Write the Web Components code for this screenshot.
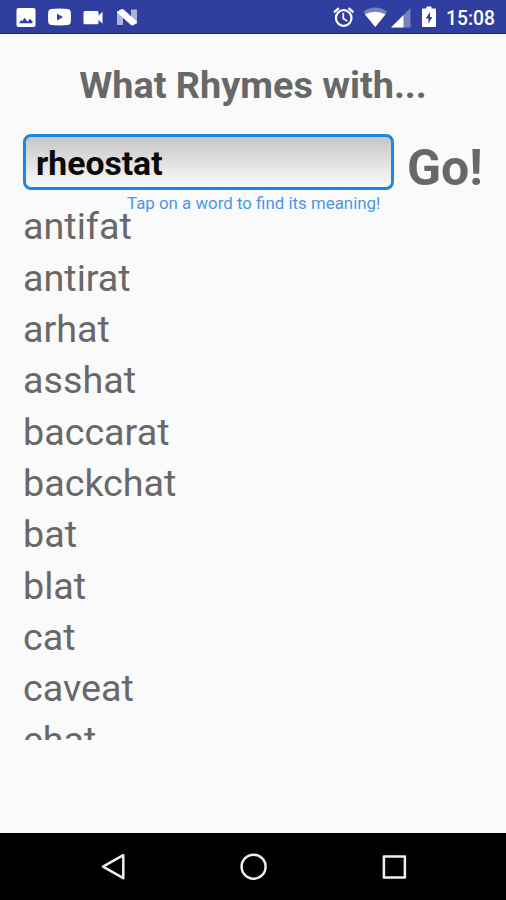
<!DOCTYPE html>
<html lang="en">
<head>
<meta charset="utf-8">
<title>What Rhymes with...</title>
<style>
    body {
        margin: 0;
        height: 900px;
        overflow: hidden;
        background: #fafafa;
        color: #686868;
        font-family: Roboto, "Liberation Sans", sans-serif;
    }
</style>
</head>
<body>
<rhyme-app>
    <status-bar slot="status">15:08</status-bar>
    <span slot="title">What Rhymes with...</span>
    <search-box slot="search" word="rheostat">Go!</search-box>
    <span slot="hint">Tap on a word to find its meaning!</span>
    <word-list slot="words" words="antifat antirat arhat asshat baccarat backchat bat blat cat caveat chat"></word-list>
    <nav-bar slot="nav"></nav-bar>
</rhyme-app>

<script>
function createTemplate(html) {
    const template = document.createElement('template');
    template.innerHTML = html;
    return template;
}

class BaseElement extends HTMLElement {
    constructor() {
        super();
        const shadowRoot = this.attachShadow({ mode: 'open' });
        shadowRoot.appendChild(this.constructor.template.content.cloneNode(true));
    }
}

class StatusBar extends BaseElement {}
StatusBar.template = createTemplate(`
    <style>
        :host {
            display: flex;
            justify-content: space-between;
            box-sizing: border-box;
            height: 34px;
            background: #303f9f;
            border-bottom: 1.5px solid #1a1f96;
            color: #fff;
        }
        svg { display: block; }
        .right { display: flex; }
        .time {
            width: 60px;
            font-size: 19.3px;
            font-weight: 500;
            line-height: 37px;
            white-space: nowrap;
        }
    </style>
    <svg width="150" height="33" viewBox="0 0 150 33" fill="#fff">
        <path fill-rule="evenodd" d="M18.5 8h15q2 0 2 2v15q0 2-2 2h-15q-2 0-2-2V10q0-2 2-2zM19 23.300h13.500v-1.800L30 18.700l-2.500 3-3-4-2.300 3.600-1-1.200z"/>
        <path fill-rule="evenodd" d="M51 9q8.500-.8 17 0 2.600.3 2.800 3 .4 5.500 0 10-.2 2.700-2.800 3-8.500.8-17 0-2.600-.3-2.800-3-.4-5 0-10 .2-2.700 2.800-3zM57 13.700v6.800l6-3.400z"/>
        <path d="M85 11h12q1.500 0 1.500 1.500v3.200l4-4v12l-4-4v3.100q0 1.500-1.500 1.500H85q-1.500 0-1.500-1.500V12.500Q83.500 11 85 11z"/>
        <path d="M117 11h6v14h-6zM131 9.500h6V24h-6z" opacity=".6"/>
        <path d="M117 12.500q3-4 6-3.500l14 12.500q-2 4-5.500 4z"/>
    </svg>
    <div class="right">
        <svg width="116" height="33" viewBox="330 0 116 33" fill="none" stroke="#fff">
            <circle cx="343.700" cy="18" r="7.800" stroke-width="2.200"/>
            <path d="M334 12.300l4.800-4.200M353.400 12.300l-4.800-4.200" stroke-width="2.200"/>
            <path d="M343.300 13v5.500l4 2.600" stroke-width="1.700"/>
            <path d="M363.500 11.500Q375 3.500 387 11.500L375.200 27z" fill="#fff" stroke="none" opacity=".35"/>
            <path d="M364.800 14.300Q375.200 9 385.700 14.300L375.200 27z" fill="#fff" stroke="none"/>
            <path d="M410.500 8v19.500H391z" fill="#fff" stroke="none" opacity=".35"/>
            <path d="M403.500 15v12.500H391z" fill="#fff" stroke="none"/>
            <path d="M426.500 6.500h5v2h3.500q1 0 1 1V26q0 1-1 1h-12q-1 0-1-1V9.500q0-1 1-1h3.500z" fill="#fff" stroke="none"/>
            <path d="M430 12l-4.300 6.500h2.700v5l4-6.500h-2.400z" fill="#303f9f" stroke="none"/>
        </svg>
        <div class="time"><slot></slot></div>
    </div>
`);

class SearchBox extends BaseElement {
    connectedCallback() {
        this.shadowRoot.querySelector('.field').textContent = this.getAttribute('word');
    }
}
SearchBox.template = createTemplate(`
    <style>
        :host {
            display: flex;
            gap: 13px;
            height: 56px;
            font-weight: bold;
        }
        .field {
            box-sizing: border-box;
            width: 371px;
            padding-left: 10px;
            border: 3px solid #1e88e0;
            border-radius: 8px;
            background: linear-gradient(#c6c6c6, #fafafa);
            color: #0a0a0a;
            font-size: 33.700px;
            line-height: 54px;
        }
        .go {
            font-size: 50px;
            line-height: 68px;
            white-space: nowrap;
        }
    </style>
    <div class="field"></div>
    <div class="go"><slot></slot></div>
`);

class WordList extends BaseElement {
    connectedCallback() {
        const list = this.shadowRoot.querySelector('ul');
        this.getAttribute('words').split(' ').forEach((word) => {
            const item = document.createElement('li');
            item.textContent = word;
            list.appendChild(item);
        });
    }
}
WordList.template = createTemplate(`
    <style>
        :host {
            display: block;
            height: 535.700px;
            overflow: hidden;
            font-size: 37.700px;
        }
        ul {
            margin: 0;
            padding: 0;
            list-style: none;
        }
        li {
            height: 51.350px;
            line-height: 45px;
        }
    </style>
    <ul></ul>
`);

class NavBar extends BaseElement {}
NavBar.template = createTemplate(`
    <style>
        :host {
            display: block;
            height: 67px;
            background: #000;
        }
        svg { display: block; }
    </style>
    <svg width="506" height="67" viewBox="0 833 506 67" fill="none" stroke="#eee" stroke-width="2.500" stroke-linejoin="round">
        <path d="M103 866.700L123.300 855.200v23z"/>
        <circle cx="253.600" cy="866.700" r="12"/>
        <rect x="383.900" y="856.400" width="21" height="21"/>
    </svg>
`);

class RhymeApp extends BaseElement {}
RhymeApp.template = createTemplate(`
    <style>
        :host {
            display: flex;
            flex-direction: column;
            width: 506px;
            height: 900px;
        }
        main {
            flex: 1;
            padding: 0 23px;
        }
        h1 {
            margin: 0;
            height: 100px;
            font-size: 37.800px;
            line-height: 102px;
            text-align: center;
            white-space: nowrap;
        }
        .hint {
            height: 14.300px;
            padding-left: 104px;
            color: #4a96e8;
            font-size: 16.870px;
            line-height: 26px;
            white-space: nowrap;
        }
    </style>
    <slot name="status"></slot>
    <main>
        <h1><slot name="title"></slot></h1>
        <slot name="search"></slot>
        <div class="hint"><slot name="hint"></slot></div>
        <slot name="words"></slot>
    </main>
    <slot name="nav"></slot>
`);

window.customElements.define('status-bar', StatusBar);
window.customElements.define('search-box', SearchBox);
window.customElements.define('word-list', WordList);
window.customElements.define('nav-bar', NavBar);
window.customElements.define('rhyme-app', RhymeApp);
</script>
</body>
</html>
